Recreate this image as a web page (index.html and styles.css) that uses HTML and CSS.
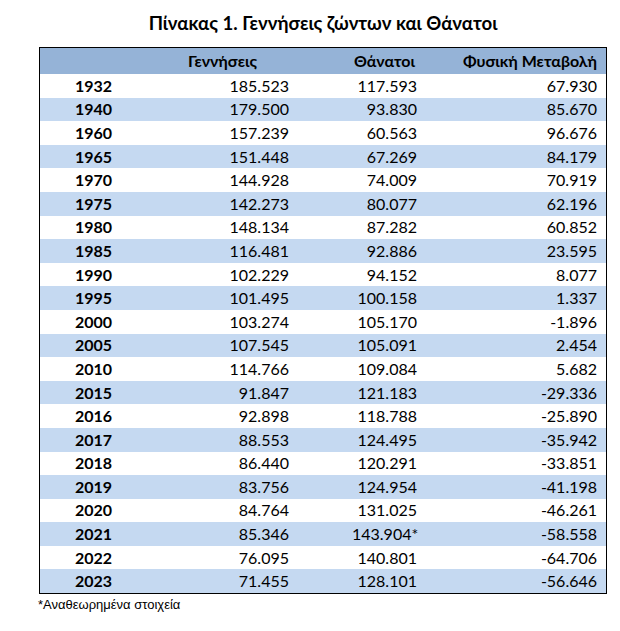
FILE: index.html
```html
<!DOCTYPE html>
<html lang="el">
<head>
<meta charset="utf-8">
<link rel="stylesheet" href="styles.css">
</head>
<body>
<div class="page">
  <h1 class="title">Πίνακας 1. Γεννήσεις ζώντων και Θάνατοι</h1>
  <div class="table">
    <div class="row head">
      <div class="c year"></div>
      <div class="c births">Γεννήσεις</div>
      <div class="c deaths">Θάνατοι</div>
      <div class="c change">Φυσική Μεταβολή</div>
    </div>
    <div class="row"><div class="c year">1932</div><div class="c num">185.523</div><div class="c num">117.593</div><div class="c num last">67.930</div></div>
    <div class="row band"><div class="c year">1940</div><div class="c num">179.500</div><div class="c num">93.830</div><div class="c num last">85.670</div></div>
    <div class="row"><div class="c year">1960</div><div class="c num">157.239</div><div class="c num">60.563</div><div class="c num last">96.676</div></div>
    <div class="row band"><div class="c year">1965</div><div class="c num">151.448</div><div class="c num">67.269</div><div class="c num last">84.179</div></div>
    <div class="row"><div class="c year">1970</div><div class="c num">144.928</div><div class="c num">74.009</div><div class="c num last">70.919</div></div>
    <div class="row band"><div class="c year">1975</div><div class="c num">142.273</div><div class="c num">80.077</div><div class="c num last">62.196</div></div>
    <div class="row"><div class="c year">1980</div><div class="c num">148.134</div><div class="c num">87.282</div><div class="c num last">60.852</div></div>
    <div class="row band"><div class="c year">1985</div><div class="c num">116.481</div><div class="c num">92.886</div><div class="c num last">23.595</div></div>
    <div class="row"><div class="c year">1990</div><div class="c num">102.229</div><div class="c num">94.152</div><div class="c num last">8.077</div></div>
    <div class="row band"><div class="c year">1995</div><div class="c num">101.495</div><div class="c num">100.158</div><div class="c num last">1.337</div></div>
    <div class="row"><div class="c year">2000</div><div class="c num">103.274</div><div class="c num">105.170</div><div class="c num last">-1.896</div></div>
    <div class="row band"><div class="c year">2005</div><div class="c num">107.545</div><div class="c num">105.091</div><div class="c num last">2.454</div></div>
    <div class="row"><div class="c year">2010</div><div class="c num">114.766</div><div class="c num">109.084</div><div class="c num last">5.682</div></div>
    <div class="row band"><div class="c year">2015</div><div class="c num">91.847</div><div class="c num">121.183</div><div class="c num last">-29.336</div></div>
    <div class="row"><div class="c year">2016</div><div class="c num">92.898</div><div class="c num">118.788</div><div class="c num last">-25.890</div></div>
    <div class="row band"><div class="c year">2017</div><div class="c num">88.553</div><div class="c num">124.495</div><div class="c num last">-35.942</div></div>
    <div class="row"><div class="c year">2018</div><div class="c num">86.440</div><div class="c num">120.291</div><div class="c num last">-33.851</div></div>
    <div class="row band"><div class="c year">2019</div><div class="c num">83.756</div><div class="c num">124.954</div><div class="c num last">-41.198</div></div>
    <div class="row"><div class="c year">2020</div><div class="c num">84.764</div><div class="c num">131.025</div><div class="c num last">-46.261</div></div>
    <div class="row band"><div class="c year">2021</div><div class="c num">85.346</div><div class="c num star">143.904*</div><div class="c num last">-58.558</div></div>
    <div class="row"><div class="c year">2022</div><div class="c num">76.095</div><div class="c num">140.801</div><div class="c num last">-64.706</div></div>
    <div class="row band"><div class="c year">2023</div><div class="c num">71.455</div><div class="c num">128.101</div><div class="c num last">-56.646</div></div>
  </div>
  <p class="note">*Αναθεωρημένα στοιχεία</p>
</div>
</body>
</html>
```

FILE: styles.css
```css
html, body {
  margin: 0;
  padding: 0;
  background: #ffffff;
}

.page {
  padding: 11px 0 0 39px;
  width: 568px;
  font-family: Lato, "Open Sans", sans-serif;
  color: #000;
}

.title {
  margin: 0 0 12px 0;
  text-align: center;
  font-size: 18.6px;
  font-weight: 700;
  line-height: 24px;
}

.table {
  border: 1.5px solid #000;
  display: flex;
  flex-direction: column;
}

.row {
  display: grid;
  grid-template-columns: 110px 145px 128px 182px;
  height: 23.6px;
  align-items: center;
  font-size: 16px;
}

.row.head {
  height: 26px;
  background: #95b3d7;
  font-weight: 700;
}

.row.band {
  background: #c5d9f1;
}

.c {
  white-space: nowrap;
  line-height: 20px;
}

.year {
  padding-left: 35px;
  font-weight: 700;
}

.births {
  text-align: center;
}

.deaths {
  text-align: right;
  padding-right: 8px;
}

.change {
  text-align: right;
  padding-right: 8px;
}

.num {
  text-align: right;
  padding-right: 6px;
}

.num.last {
  padding-right: 8px;
}

.num.star {
  text-align: left;
  padding-left: 57px;
}

.note {
  margin: 3px 0 0 -1px;
  font-family: "Liberation Sans", Arial, sans-serif;
  font-size: 13px;
  line-height: 16px;
}
```
